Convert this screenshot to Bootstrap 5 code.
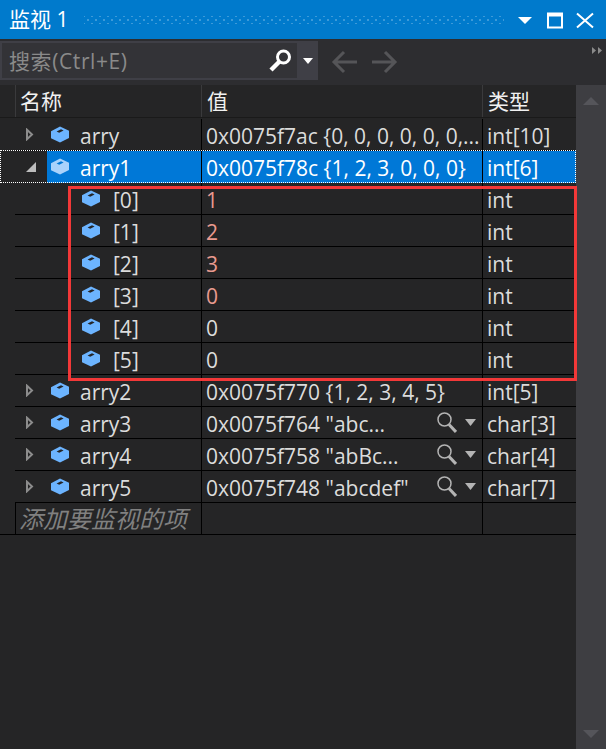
<!DOCTYPE html>
<html lang="zh">
<head>
<meta charset="utf-8">
<title>监视 1</title>
<link href="https://cdn.jsdelivr.net/npm/bootstrap@5.3.0/dist/css/bootstrap.min.css" rel="stylesheet">
<style>
html,body{height:749px;overflow:hidden}
body{background:#252526;font-family:"Open Sans","Noto Sans CJK SC",sans-serif;font-size:21px;color:#dcdcdc;position:relative}
.titlebar{height:39px;background:#007acc;color:#fff;padding:0 12px 0 9px}
.ttl{font-size:21px;line-height:39px;white-space:nowrap}
.grip{height:8px;margin:0 14px 0 16px;background-image:radial-gradient(#3d9ad9 1px,transparent 1.2px),radial-gradient(#3d9ad9 1px,transparent 1.2px);background-size:8px 8px;background-position:0 0,4px 4px}
.toolbar{height:46px;position:relative;background:#2d2d30}
.searchbox{width:318px;height:39px;margin-top:2px;background:#3f3f46;padding:2px 0 2px 2px}
.searchin{width:295px;background:#333337;color:#8a8a8a;padding-left:7px;line-height:35px;font-size:21px;letter-spacing:.6px}
.searchin>span{padding-top:2px}
.arw{margin:10px 0 0 12px}
.gut{width:15px;flex:none}
.cn{width:186px;flex:none}
.cv{width:281px;flex:none}
.ct{width:94px;flex:none}
.hdr{height:33px;margin-bottom:1px;border-bottom:1px solid #1a1a1a;color:#f1f1f1}
.hdr>div{height:32px;line-height:32px;padding-left:5px;border-left:1px solid #3a3a3c}
.hdr>.cn{padding-left:4px}
.hdr>.gut{border-left:0;padding:0}
.rw{height:32px;line-height:35px;white-space:nowrap;position:relative}
.rw>div{height:32px;border-bottom:1px solid #000}
.rw>.gut{border-bottom:0}
.rw>.cv,.rw>.ct{border-left:1px solid #000;padding-left:4px}
.cn{display:flex;align-items:center}
.rw>.cn{padding-left:11px}
.rw>.cn>span{padding-top:4px}
.exp{width:10px;flex:none;margin-right:14px}
.cube{width:20px;height:17px;flex:none;margin-right:10px}
.rw.kid>.cn{padding-left:66px}
.kid .cube{margin-right:12px}
.sel>div{border-bottom-color:transparent;color:#fff}
.sel>.cv,.sel>.ct{background:#0078d7}
.sel>.cn{background:linear-gradient(90deg,transparent 32px,#0078d7 32px)}
.sel::after{content:"";position:absolute;inset:-1px 0 0 0;border:1px dotted #fff;pointer-events:none}
.rv{color:#e99a8f}
.rw>.hint{color:#808080;font-style:italic;font-size:24px;line-height:33px;padding-left:3px;border-left:1px solid #000}
.lastgut{border-bottom:1px solid #000!important}
.vtxt{flex:1;min-width:0;overflow:hidden}
.mgl{margin:5px 8px 0 0}
.dda{margin:12px 6px 0 0}
.tbl{width:576px}
.sbar{width:30px;background:#3e3e42;height:664px;flex:none;padding:12px 0 11px}
.redbox{position:absolute;left:68px;top:186px;width:509px;height:195px;border:3px solid #f33838;pointer-events:none;z-index:2}
.over{position:absolute;top:8px;right:3px;line-height:0}
</style>
</head>
<body>
<svg width="0" height="0" class="d-none"><defs>
<symbol id="cb" viewBox="0 0 20 17"><path fill="#6cb4ff" d="M1 5.200 10 .6l9 4.200v7.200l-9 4.600-9-4.400z"/><path fill="#252526" d="M6.600 5.400 11 3.200l2.600 1.200-4.400 2.300z"/></symbol>
<symbol id="cs" viewBox="0 0 20 17"><path fill="#a9d2fb" d="M1 5.200 10 .6l9 4.200v7.200l-9 4.600-9-4.400z"/><path fill="#0078d7" d="M6.600 5.400 11 3.200l2.600 1.200-4.400 2.300z"/></symbol>
<symbol id="tr" viewBox="0 0 10 13"><path fill="#252526" stroke="#8c8c8c" stroke-width="2" d="M1 1.800 6 6.500 1 11.200z"/></symbol>
<symbol id="mg" viewBox="0 0 20 21"><circle cx="7.500" cy="7.500" r="6.500" fill="none" stroke="#b4b4b4" stroke-width="1.500"/><path d="M12 12.500 19 20" stroke="#b4b4b4" stroke-width="3"/></symbol>
</defs></svg>

<div class="titlebar d-flex align-items-center">
  <span class="ttl">监视 1</span>
  <div class="grip flex-grow-1"></div>
  <svg width="76" height="20" viewBox="0 0 76 20"><path fill="#fff" d="M0 7h14l-7 7z"/><path fill="none" stroke="#fff" stroke-width="2" d="M30 3.500h14v14H30z"/><path stroke="#fff" stroke-width="3" d="M30 5h14"/><path stroke="#fff" stroke-width="2" fill="none" d="M59 3.500l16 14M75 3.500l-16 14"/></svg>
</div>

<div class="toolbar d-flex">
  <div class="searchbox d-flex">
    <div class="searchin d-flex justify-content-between align-items-center">
      <span>搜索(Ctrl+E)</span>
      <svg width="25" height="25" viewBox="0 0 25 25" class="me-1"><circle cx="15.500" cy="9" r="6" fill="none" stroke="#fff" stroke-width="3"/><path d="M11 14 3 22" stroke="#fff" stroke-width="4.500"/></svg>
    </div>
    <div class="flex-grow-1 d-flex align-items-center justify-content-center"><svg width="10" height="6" viewBox="0 0 10 6"><path fill="#fff" d="M0 0h10L5 6z"/></svg></div>
  </div>
  <svg class="arw" width="70" height="26" viewBox="0 0 70 26"><path fill="none" stroke="#555558" stroke-width="3" d="M27 13H4M14 3 4 13l10 10M42 13h23M55 3l10 10-10 10"/></svg>
  <svg class="over" width="11" height="7" viewBox="0 0 11 7"><path fill="#8a8a8a" d="M0 0l4 3.500L0 7zM6 0l4 3.500L6 7z"/></svg>
</div>

<div class="d-flex">
  <div class="tbl">
    <div class="hdr d-flex"><div class="gut"></div><div class="cn">名称</div><div class="cv">值</div><div class="ct">类型</div></div>

    <div class="rw d-flex"><div class="gut"></div><div class="cn"><svg class="exp" height="13"><use href="#tr"/></svg><svg class="cube"><use href="#cb"/></svg><span>arry</span></div><div class="cv">0x0075f7ac {0, 0, 0, 0, 0, 0,...</div><div class="ct">int[10]</div></div>

    <div class="rw sel d-flex"><div class="gut"></div><div class="cn"><svg class="exp" height="10" viewBox="0 0 10 10"><path fill="#bdbdbd" d="M10 0v10H0z"/></svg><svg class="cube"><use href="#cs"/></svg><span>arry1</span></div><div class="cv">0x0075f78c {1, 2, 3, 0, 0, 0}</div><div class="ct">int[6]</div></div>

    <div class="rw kid d-flex"><div class="gut"></div><div class="cn"><svg class="cube"><use href="#cb"/></svg><span>[0]</span></div><div class="cv rv">1</div><div class="ct">int</div></div>
    <div class="rw kid d-flex"><div class="gut"></div><div class="cn"><svg class="cube"><use href="#cb"/></svg><span>[1]</span></div><div class="cv rv">2</div><div class="ct">int</div></div>
    <div class="rw kid d-flex"><div class="gut"></div><div class="cn"><svg class="cube"><use href="#cb"/></svg><span>[2]</span></div><div class="cv rv">3</div><div class="ct">int</div></div>
    <div class="rw kid d-flex"><div class="gut"></div><div class="cn"><svg class="cube"><use href="#cb"/></svg><span>[3]</span></div><div class="cv rv">0</div><div class="ct">int</div></div>
    <div class="rw kid d-flex"><div class="gut"></div><div class="cn"><svg class="cube"><use href="#cb"/></svg><span>[4]</span></div><div class="cv">0</div><div class="ct">int</div></div>
    <div class="rw kid d-flex"><div class="gut"></div><div class="cn"><svg class="cube"><use href="#cb"/></svg><span>[5]</span></div><div class="cv">0</div><div class="ct">int</div></div>

    <div class="rw d-flex"><div class="gut"></div><div class="cn"><svg class="exp" height="13"><use href="#tr"/></svg><svg class="cube"><use href="#cb"/></svg><span>arry2</span></div><div class="cv">0x0075f770 {1, 2, 3, 4, 5}</div><div class="ct">int[5]</div></div>

    <div class="rw d-flex"><div class="gut"></div><div class="cn"><svg class="exp" height="13"><use href="#tr"/></svg><svg class="cube"><use href="#cb"/></svg><span>arry3</span></div><div class="cv d-flex"><span class="vtxt">0x0075f764 "abc...</span><svg class="mgl" width="20" height="21"><use href="#mg"/></svg><svg class="dda" width="11" height="7" viewBox="0 0 11 7"><path fill="#b4b4b4" d="M0 0h11L5.500 7z"/></svg></div><div class="ct">char[3]</div></div>

    <div class="rw d-flex"><div class="gut"></div><div class="cn"><svg class="exp" height="13"><use href="#tr"/></svg><svg class="cube"><use href="#cb"/></svg><span>arry4</span></div><div class="cv d-flex"><span class="vtxt">0x0075f758 "abBc...</span><svg class="mgl" width="20" height="21"><use href="#mg"/></svg><svg class="dda" width="11" height="7" viewBox="0 0 11 7"><path fill="#b4b4b4" d="M0 0h11L5.500 7z"/></svg></div><div class="ct">char[4]</div></div>

    <div class="rw d-flex"><div class="gut"></div><div class="cn"><svg class="exp" height="13"><use href="#tr"/></svg><svg class="cube"><use href="#cb"/></svg><span>arry5</span></div><div class="cv d-flex"><span class="vtxt">0x0075f748 "abcdef"</span><svg class="mgl" width="20" height="21"><use href="#mg"/></svg><svg class="dda" width="11" height="7" viewBox="0 0 11 7"><path fill="#b4b4b4" d="M0 0h11L5.500 7z"/></svg></div><div class="ct">char[7]</div></div>

    <div class="rw d-flex"><div class="gut lastgut"></div><div class="cn hint">添加要监视的项</div><div class="cv"></div><div class="ct"></div></div>
  </div>
  <div class="sbar d-flex flex-column justify-content-between align-items-center"><svg width="16" height="8" viewBox="0 0 16 8"><path fill="#55555a" d="M8 0l8 8H0z"/></svg><svg width="16" height="8" viewBox="0 0 16 8"><path fill="#55555a" d="M8 8l8-8H0z"/></svg></div>
</div>
<div class="redbox"></div>
<script src="https://cdn.jsdelivr.net/npm/bootstrap@5.3.0/dist/js/bootstrap.bundle.min.js"></script>
</body>
</html>
